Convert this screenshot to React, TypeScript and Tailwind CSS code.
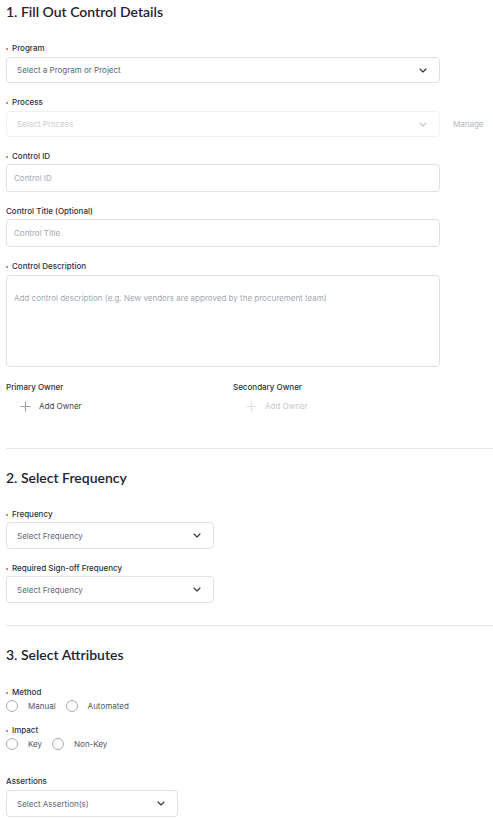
import React from 'react'

const font = { fontFamily: 'Inter, "Noto Sans", sans-serif' }

function Chevron({ light }: { light?: boolean }) {
  return (
    <svg width="8" height="5" viewBox="0 0 8 5" fill="none">
      <path d="M1 1l3 3 3-3" stroke={light ? '#c4c8cf' : '#2f3441'} strokeWidth="1.1" strokeLinecap="round" strokeLinejoin="round" />
    </svg>
  )
}

function Label({ text, required, className }: { text: string; required?: boolean; className: string }) {
  return (
    <div className={`flex items-center h-[12px] text-[8px] font-medium text-[#2b2f3a] ${className}`}>
      {required && <span className="w-[2px] h-[2px] rounded-full bg-[#e0534f] mr-[4px] mt-[2px]"></span>}
      {text}
    </div>
  )
}

function Select({ text, w, h, light, className }: { text: string; w: string; h: string; light?: boolean; className: string }) {
  return (
    <div className={`flex items-center justify-between rounded-[4px] border ${light ? 'border-[#eef0f4]' : 'border-[#dde1ea]'} bg-white pl-[10px] pr-[12px] ${h} ${w} ${className}`}>
      <span className={`text-[8px] ${light ? 'text-[#c9ccd2]' : 'text-[#5f6573]'}`}>{text}</span>
      <Chevron light={light} />
    </div>
  )
}

function Input({ text, className }: { text: string; className: string }) {
  return (
    <div className={`flex items-center rounded-[4px] border border-[#dde1ea] bg-white pl-[7px] w-[434px] h-[28px] ${className}`}>
      <span className="text-[8px] text-[#a3a8b2]">{text}</span>
    </div>
  )
}

function Plus({ light }: { light?: boolean }) {
  return (
    <svg width="11" height="11" viewBox="0 0 11 11">
      <path d="M5.5 0.5v10M0.5 5.5h10" stroke={light ? '#dcdfe4' : '#9ea3ab'} strokeWidth="1.2" />
    </svg>
  )
}

function Radio({ text, className }: { text: string; className?: string }) {
  return (
    <div className={`flex items-center ${className ?? ''}`}>
      <span className="w-[12px] h-[12px] rounded-full border border-[#a7acb4] bg-white"></span>
      <span className="ml-[10px] text-[8px] text-[#50555f]">{text}</span>
    </div>
  )
}

function Heading({ text, className }: { text: string; className: string }) {
  return (
    <h2 className={`h-[16px] leading-[16px] text-[14px] font-semibold text-[#1f2330] ${className}`} style={{ fontFamily: 'Lato, "Noto Sans", sans-serif' }}>
      {text}
    </h2>
  )
}

export default function App() {
  return (
    <div className="w-[493px] min-h-[819px] bg-white pl-[6px] pt-[4px]" style={font}>
      <Heading text="1. Fill Out Control Details" className="" />

      <Label text="Program" required className="mt-[22px]" />
      <Select text="Select a Program or Project" w="w-[434px]" h="h-[26px]" className="mt-[3px]" />

      <Label text="Process" required className="mt-[13px]" />
      <div className="flex items-center mt-[3px]">
        <Select text="Select Process" w="w-[434px]" h="h-[26px]" light className="" />
        <span className="ml-[13px] text-[8px] text-[#b3b7be]">Manage</span>
      </div>

      <Label text="Control ID" required className="mt-[13px]" />
      <Input text="Control ID" className="mt-[2px]" />

      <Label text="Control Title (Optional)" className="mt-[13px]" />
      <Input text="Control Title" className="mt-[2px]" />

      <Label text="Control Description" required className="mt-[13px]" />
      <div className="mt-[3px] w-[434px] h-[92px] rounded-[4px] border border-[#dde1ea] bg-white px-[7px] pt-[7px]">
        <span className="text-[8px] text-[#a3a8b2]">Add control description (e.g. New vendors are approved by the procurement team)</span>
      </div>

      <div className="flex mt-[14px]">
        <div className="w-[227px]">
          <Label text="Primary Owner" className="" />
          <div className="flex items-center h-[16px] mt-[5px] pl-[14px]">
            <Plus />
            <span className="ml-[8px] text-[8px] text-[#3e4350]">Add Owner</span>
          </div>
        </div>
        <div>
          <Label text="Secondary Owner" className="" />
          <div className="flex items-center h-[16px] mt-[5px] pl-[13px]">
            <Plus light />
            <span className="ml-[8px] text-[8px] text-[#c6c9cf]">Add Owner</span>
          </div>
        </div>
      </div>

      <div className="mt-[34px] h-px bg-[#e3e6eb]"></div>

      <Heading text="2. Select Frequency" className="mt-[21px]" />

      <Label text="Frequency" required className="mt-[22px]" />
      <Select text="Select Frequency" w="w-[208px]" h="h-[27px]" className="mt-[2px]" />

      <Label text="Required Sign-off Frequency" required className="mt-[13px]" />
      <Select text="Select Frequency" w="w-[208px]" h="h-[27px]" className="mt-[2px]" />

      <div className="mt-[22px] h-px bg-[#e3e6eb]"></div>

      <Heading text="3. Select Attributes" className="mt-[21px]" />

      <Label text="Method" required className="mt-[23px]" />
      <div className="flex items-center h-[12px] mt-[2px]">
        <Radio text="Manual" />
        <Radio text="Automated" className="ml-[10px]" />
      </div>

      <Label text="Impact" required className="mt-[12px]" />
      <div className="flex items-center h-[12px] mt-[2px]">
        <Radio text="Key" />
        <Radio text="Non-Key" className="ml-[10px]" />
      </div>

      <Label text="Assertions" className="mt-[25px]" />
      <Select text="Select Assertion(s)" w="w-[172px]" h="h-[27px]" className="mt-[3px]" />
    </div>
  )
}
